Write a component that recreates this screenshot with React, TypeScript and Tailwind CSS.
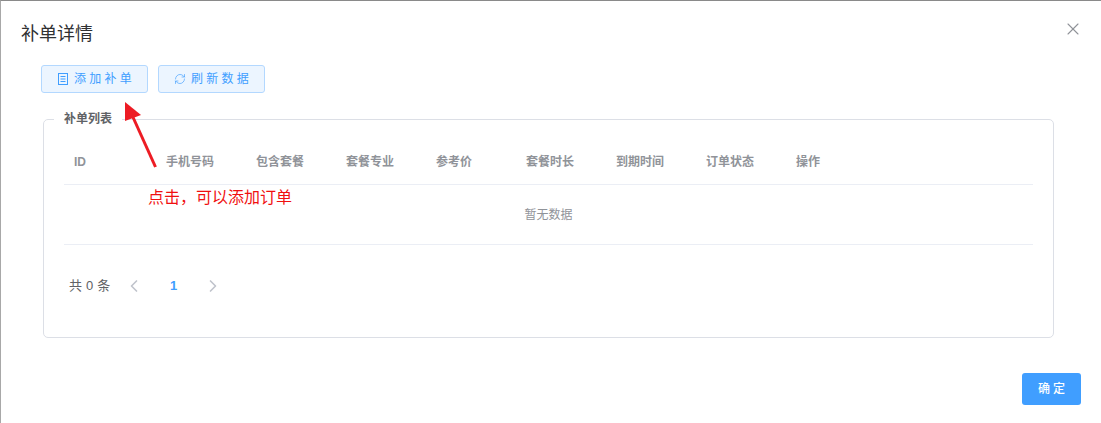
import { ChevronLeft, ChevronRight, X, RefreshCw } from 'lucide-react';

const columns = ['手机号码', '包含套餐', '套餐专业', '参考价', '套餐时长', '到期时间', '订单状态', '操作'];

export default function App() {
  return (
    <div className="relative h-[423px] w-[1101px] overflow-hidden border-t border-l border-t-[#8a8a8a] border-l-[#a8a8a8] bg-white font-['Liberation_Sans','Noto_Sans_CJK_SC',sans-serif]">
      {/* Header */}
      <div className="flex items-start justify-between pt-[21px] pr-[18px] pl-5">
        <h2 className="h-[24px] text-[18px] leading-[24px] font-normal text-[#303133]">补单详情</h2>
        <X size={20} strokeWidth={1.3} className="-mt-[3px] text-[#909399]" />
      </div>

      <div className="pt-[19px] pl-10">
        {/* Toolbar */}
        <div className="flex gap-[10px]">
          <button className="flex h-7 w-[107px] items-center justify-center gap-[5px] rounded-[3px] border border-[#b3d8ff] bg-[#ecf5ff] pl-[3px] text-[12px] tracking-[3.2px] text-[#409eff]">
            <svg width="12" height="12" viewBox="0 0 12 12" fill="none" stroke="currentColor" strokeWidth="1">
              <rect x="1.5" y="0.5" width="9" height="11" />
              <path d="M3.5 3.5h5M3.5 6h5M3.5 8.5h5" />
            </svg>
            添加补单
          </button>
          <button className="flex h-7 w-[107px] items-center justify-center gap-[5px] rounded-[3px] border border-[#b3d8ff] bg-[#ecf5ff] pl-[3px] text-[12px] tracking-[3.2px] text-[#409eff]">
            <RefreshCw size={12} strokeWidth={1.3} />
            刷新数据
          </button>
        </div>

        {/* Order list */}
        <fieldset className="mt-[19px] ml-[2px] h-[226px] w-[1011px] rounded-[5px] border border-[#dcdfe6] px-5">
          <legend className="ml-[-10px] px-[10px] text-[12px] leading-[14px] font-bold text-[#606266]">补单列表</legend>
          <div className="mt-[11px] w-[969px]">
            <div className="flex h-[48px] items-center border-b border-[#ebeef5] pt-[2px] text-[12px] font-bold text-[#909399]">
              <div className="w-[92px] pl-[10px]">ID</div>
              {columns.map((col) => (
                <div key={col} className="w-[90px] pl-[10px]">{col}</div>
              ))}
            </div>
            <div className="flex h-[60px] items-center justify-center border-b border-[#ebeef5] text-[12px] text-[#909399]">
              暂无数据
            </div>
          </div>
          <div className="mt-[31px] flex h-[20px] items-center pl-[5px] text-[13px] text-[#606266]">
            <span className="w-[55px] tracking-[0.2px]">共 0 条</span>
            <ChevronLeft size={20} strokeWidth={2} className="text-[#c0c4cc]" />
            <span className="w-[59px] text-center font-bold text-[#409eff]">1</span>
            <ChevronRight size={20} strokeWidth={2} className="text-[#c0c4cc]" />
          </div>
        </fieldset>
      </div>

      {/* Footer */}
      <div className="mt-[35px] flex justify-end pr-5">
        <button className="h-8 w-[59px] rounded-[3px] bg-[#409eff] pl-[3px] text-[12px] font-medium tracking-[3px] text-white">确定</button>
      </div>

      {/* Annotation over the screenshot */}
      <svg className="absolute top-[-1px] left-[-1px]" width="200" height="180" viewBox="0 0 200 180">
        <line x1="155.5" y1="167" x2="132" y2="115" stroke="#ed1c24" strokeWidth="3" />
        <polygon points="125,102 141,115 125,121" fill="#ed1c24" />
      </svg>
      <span className="absolute top-[187px] left-[147px] text-[16px] leading-[20px] text-[#f01010]">点击，可以添加订单</span>
    </div>
  );
}
